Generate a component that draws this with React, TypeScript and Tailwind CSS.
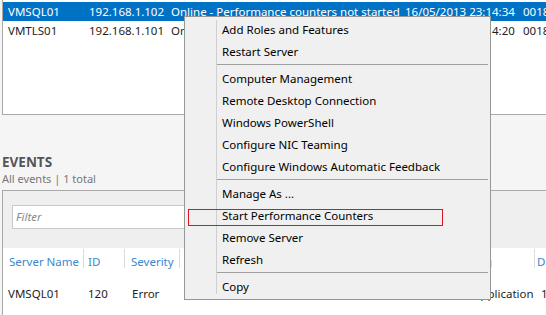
import React from "react";

const menuItems: (string | null)[] = [
  "Add Roles and Features",
  "Restart Server",
  null,
  "Computer Management",
  "Remote Desktop Connection",
  "Windows PowerShell",
  "Configure NIC Teaming",
  "Configure Windows Automatic Feedback",
  null,
  "Manage As ...",
  "Start Performance Counters",
  "Remove Server",
  "Refresh",
  null,
  "Copy",
];

export default function App() {
  return (
    <div
      className="relative w-[546px] h-[315px] overflow-hidden bg-[#f5f5f5] text-[11.5px] text-[#1e1e1e]"
      style={{ fontFamily: '"Noto Sans", "Open Sans", sans-serif' }}
    >
      {/* Servers table */}
      <div className="ml-[2px] h-[115px] bg-white border-l border-b border-[#a9a9a9] pt-[2px]">
        <div className="flex h-[19px] items-center bg-[#0072c6] text-white whitespace-nowrap">
          <div className="w-[86px] pl-[5px] shrink-0">VMSQL01</div>
          <div className="w-[82px] shrink-0">192.168.1.102</div>
          <div className="w-[234px] shrink-0">Online - Performance counters not started</div>
          <div className="w-[118px] shrink-0">16/05/2013 23:14:34</div>
          <div className="shrink-0">00186</div>
        </div>
        <div className="flex h-[19px] items-center whitespace-nowrap">
          <div className="w-[86px] pl-[5px] shrink-0">VMTLS01</div>
          <div className="w-[82px] shrink-0">192.168.1.101</div>
          <div className="w-[234px] shrink-0">Online - Performance counters not started</div>
          <div className="w-[118px] shrink-0">16/05/2013 23:14:20</div>
          <div className="shrink-0">00186</div>
        </div>
      </div>

      {/* Events heading */}
      <div className="mt-[39px] pl-[2px]">
        <div className="text-[13.5px] font-bold leading-[17px] text-[#555555]">EVENTS</div>
        <div className="text-[11px] leading-[16px] text-[#777777]">All events | 1 total</div>
      </div>

      {/* Events box */}
      <div className="mt-[3px] ml-[2px] border-l border-t border-[#a9a9a9] bg-[#efefef] h-[200px]">
        <div className="pt-[14px] pl-[9px]">
          <div className="w-[400px] h-[24px] bg-white border border-[#c8c8c8] flex items-center pl-[3px] italic text-[#8a8a8a]">
            Filter
          </div>
        </div>
        <div className="mt-[19px] bg-white h-[100px]">
          <div className="flex h-[34px] whitespace-nowrap text-[#3a87cf]">
            <div className="w-[81px] shrink-0 pl-[6px] h-[19px] mt-[1px] border-r border-[#dcdcdc] leading-[26px]">Server Name</div>
            <div className="w-[41px] shrink-0 pl-[4px] h-[19px] mt-[1px] border-r border-[#dcdcdc] leading-[26px]">ID</div>
            <div className="w-[55px] shrink-0 pl-[6px] h-[19px] mt-[1px] border-r border-[#dcdcdc] leading-[26px]">Severity</div>
            <div className="w-[288px] shrink-0 pl-[6px] h-[19px] mt-[1px] border-r border-[#dcdcdc] leading-[26px]">Source</div>
            <div className="w-[67px] shrink-0 pl-[4px] h-[19px] mt-[1px] border-r border-[#dcdcdc] leading-[26px]">Log</div>
            <div className="shrink-0 pl-[2px] h-[19px] mt-[1px] leading-[26px]">Date and Time</div>
          </div>
          <div className="flex whitespace-nowrap leading-[24px]">
            <div className="w-[82px] shrink-0 pl-[5px]">VMSQL01</div>
            <div className="w-[42px] shrink-0 pl-[3px]">120</div>
            <div className="w-[56px] shrink-0 pl-[5px]">Error</div>
            <div className="w-[288px] shrink-0 pl-[8px]">Microsoft-Windows-PerfLib</div>
            <div className="w-[67px] shrink-0 pl-[2px]">Application</div>
            <div className="shrink-0 pl-[3px]">16/05/2013</div>
          </div>
        </div>
      </div>

      {/* Context menu */}
      <div className="absolute left-[184px] top-[16px] w-[307px] h-[284px] bg-[#f0f0f0] border border-[#979797] pt-[2px] text-black">
        <div className="absolute left-[31px] top-[3px] w-px h-[274px] bg-[#cfcfcf]" />
        {menuItems.map((item, i) =>
          item === null ? (
            <div key={i} className="ml-[31px] mr-[2px] mt-[1px] mb-[3px] h-px bg-[#a0a0a0]" />
          ) : (
            <div key={i} className="h-[22px] leading-[22px] pl-[37px] whitespace-nowrap">
              {item}
            </div>
          )
        )}
      </div>

      {/* Red highlight annotation */}
      <div className="absolute left-[188px] top-[209px] w-[255px] h-[17px] border border-[#e81123]" />
    </div>
  );
}
